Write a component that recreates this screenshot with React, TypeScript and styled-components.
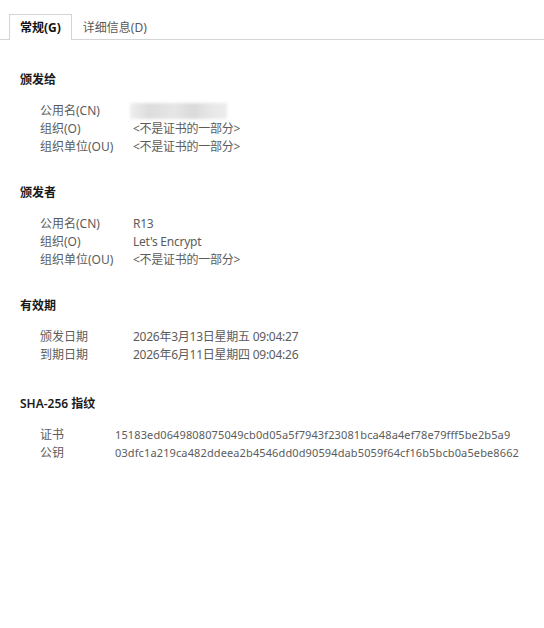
import styled, { createGlobalStyle } from 'styled-components';

type Row = { label: string; value: string; blurred?: boolean };
type Group = { title: string; labelWidth: number; compact?: boolean; rows: Row[] };

const NOT_PART = '<不是证书的一部分>';

const groups: Group[] = [
    {
        title: '颁发给',
        labelWidth: 93,
        rows: [
            { label: '公用名(CN)', value: '', blurred: true },
            { label: '组织(O)', value: NOT_PART },
            { label: '组织单位(OU)', value: NOT_PART },
        ],
    },
    {
        title: '颁发者',
        labelWidth: 93,
        rows: [
            { label: '公用名(CN)', value: 'R13' },
            { label: '组织(O)', value: "Let's Encrypt" },
            { label: '组织单位(OU)', value: NOT_PART },
        ],
    },
    {
        title: '有效期',
        labelWidth: 93,
        rows: [
            { label: '颁发日期', value: '2026年3月13日星期五 09:04:27' },
            { label: '到期日期', value: '2026年6月11日星期四 09:04:26' },
        ],
    },
    {
        title: 'SHA-256 指纹',
        labelWidth: 75,
        compact: true,
        rows: [
            { label: '证书', value: '15183ed0649808075049cb0d05a5f7943f23081bca48a4ef78e79fff5be2b5a9' },
            { label: '公钥', value: '03dfc1a219ca482ddeea2b4546dd0d90594dab5059f64cf16b5bcb0a5ebe8662' },
        ],
    },
];

export default function App(): JSX.Element {
    return (
        <>
            <GlobalStyle />
            <Page>
                <TabBar>
                    <Tab active>常规(G)</Tab>
                    <Tab>详细信息(D)</Tab>
                </TabBar>
                <Content>
                    {groups.map((group) => (
                        <Section key={group.title}>
                            <SectionTitle>{group.title}</SectionTitle>
                            <Fields labelWidth={group.labelWidth}>
                                {group.rows.map((row) => (
                                    <Field key={row.label}>
                                        <Label>{row.label}</Label>
                                        {row.blurred ? (
                                            <Blurred aria-hidden />
                                        ) : (
                                            <Value compact={group.compact}>{row.value}</Value>
                                        )}
                                    </Field>
                                ))}
                            </Fields>
                        </Section>
                    ))}
                </Content>
            </Page>
        </>
    );
}

const GlobalStyle = createGlobalStyle`
    html, body {
        margin: 0;
        padding: 0;
        background: #ffffff;
    }
    body {
        font-family: "Noto Sans", "Noto Sans CJK SC", sans-serif;
        font-size: 12px;
    }
`;

const Page = styled.div`
    width: 544px;
    height: 628px;
    background: #ffffff;
    overflow: hidden;
`;

const TabBar = styled.div`
    display: flex;
    align-items: flex-end;
    height: 39px;
    padding-left: 9px;
    border-bottom: 1px solid #d4d4d4;
`;

const Tab = styled.div<{ active?: boolean }>`
    box-sizing: border-box;
    height: ${(p) => (p.active ? '26px' : '24px')};
    margin-bottom: ${(p) => (p.active ? '-1px' : '0')};
    padding: 1px 10px 0;
    display: flex;
    align-items: center;
    line-height: 18px;
    color: ${(p) => (p.active ? '#111111' : '#595959')};
    font-weight: ${(p) => (p.active ? 700 : 400)};
    background: #ffffff;
    border: 1px solid ${(p) => (p.active ? '#d4d4d4' : 'transparent')};
    border-bottom: none;
`;

const Content = styled.div`
    padding: 0 20px;
    display: flex;
    flex-direction: column;
`;

const Section = styled.div`
    margin-top: 28px;

    &:first-child {
        margin-top: 31px;
    }

    &:last-child {
        margin-top: 31px;
    }
`;

const SectionTitle = styled.div`
    line-height: 18px;
    color: #1a1a1a;
    font-weight: 600;
`;

const Fields = styled.div<{ labelWidth: number }>`
    margin-top: 13px;
    padding-left: 20px;
    display: grid;
    grid-template-columns: ${(p) => p.labelWidth}px 1fr;
`;

const Field = styled.div`
    display: contents;
`;

const Label = styled.div`
    line-height: 18px;
    color: #5c5c5c;
    white-space: nowrap;
`;

const Value = styled.div<{ compact?: boolean }>`
    line-height: 18px;
    color: #5c5c5c;
    white-space: nowrap;
    font-size: ${(p) => (p.compact ? '11px' : '12px')};
    letter-spacing: ${(p) => (p.compact ? '0.12px' : '-0.25px')};
`;

const Blurred = styled.div`
    width: 97px;
    height: 16px;
    margin: 1px 0 0 -3px;
    background: linear-gradient(
        90deg,
        #eeeeee 0%,
        #dcdcdc 20%,
        #e6e6e6 45%,
        #dadada 65%,
        #e8e8e8 85%,
        #ededed 100%
    );
    filter: blur(1.5px);
`;
